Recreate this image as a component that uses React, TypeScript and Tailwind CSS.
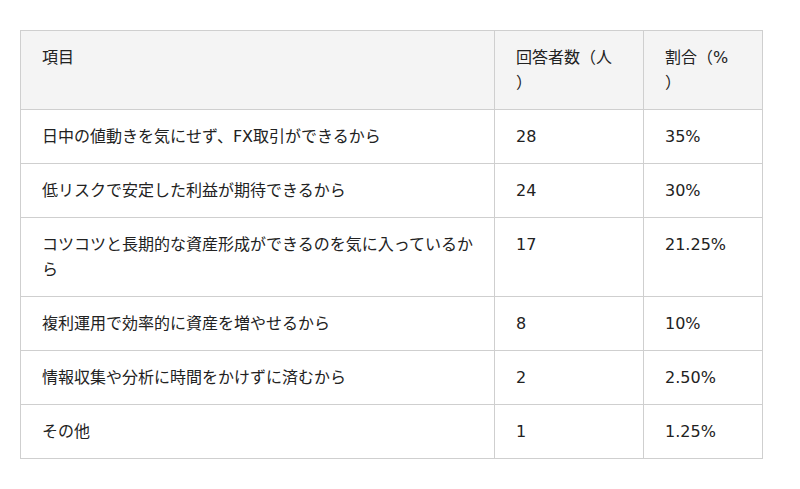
import React from 'react';

export default function App() {
  const rows = [
    { item: '日中の値動きを気にせず、FX取引ができるから', count: '28', ratio: '35%' },
    { item: '低リスクで安定した利益が期待できるから', count: '24', ratio: '30%' },
    { item: 'コツコツと長期的な資産形成ができるのを気に入っているから', count: '17', ratio: '21.25%' },
    { item: '複利運用で効率的に資産を増やせるから', count: '8', ratio: '10%' },
    { item: '情報収集や分析に時間をかけずに済むから', count: '2', ratio: '2.50%' },
    { item: 'その他', count: '1', ratio: '1.25%' },
  ];

  const cell = 'border border-[#cfcfcf] px-[21px] py-[14px] text-left align-top font-normal';

  return (
    <div
      className="min-h-[489px] w-[800px] bg-white pt-[30px] pl-[20px] text-[16px] leading-[25px] text-[#222]"
      style={{ fontFamily: '"DejaVu Sans", "Noto Sans CJK JP", sans-serif' }}
    >
      <table className="w-[742px] table-fixed border-collapse">
        <colgroup>
          <col className="w-[474px]" />
          <col className="w-[149px]" />
          <col className="w-[119px]" />
        </colgroup>
        <thead>
          <tr className="bg-[#f4f4f4]">
            <th className={cell}>項目</th>
            <th className={cell}>
              回答者数（人
              <br />）
            </th>
            <th className={cell}>
              割合（%
              <br />）
            </th>
          </tr>
        </thead>
        <tbody>
          {rows.map((row, index) => (
            <tr key={index}>
              <td className={cell}>{row.item}</td>
              <td className={cell}>{row.count}</td>
              <td className={cell}>{row.ratio}</td>
            </tr>
          ))}
        </tbody>
      </table>
    </div>
  );
}
